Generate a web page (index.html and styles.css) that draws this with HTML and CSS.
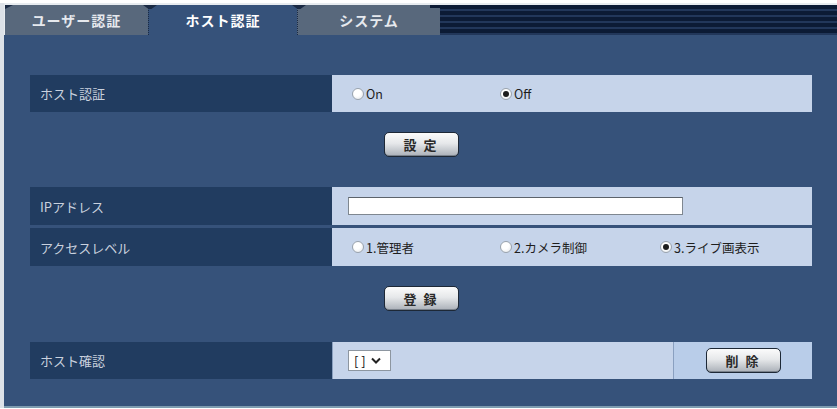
FILE: index.html
```html
<!DOCTYPE html>
<html lang="ja">
<head>
  <meta charset="UTF-8">
  <title>ホスト認証</title>
  <link rel="stylesheet" href="styles.css">
</head>
<body>
  <div class="window">
    <nav class="tabs">
      <div class="tab">ユーザー認証</div>
      <div class="tab tab-active">ホスト認証</div>
      <div class="tab">システム</div>
      <div class="tab-fill"></div>
    </nav>

    <main class="panel">
      <div class="row">
        <div class="label">ホスト認証</div>
        <div class="value">
          <label class="opt"><input type="radio" name="auth"> On</label>
          <label class="opt"><input type="radio" name="auth" checked> Off</label>
        </div>
      </div>
      <div class="actions">
        <button class="btn">設 定</button>
      </div>

      <div class="group">
        <div class="row">
          <div class="label">IPアドレス</div>
          <div class="value">
            <input type="text" class="text-input">
          </div>
        </div>
        <div class="row">
          <div class="label">アクセスレベル</div>
          <div class="value">
            <label class="opt"><input type="radio" name="level"> 1.管理者</label>
            <label class="opt opt-wide"><input type="radio" name="level"> 2.カメラ制御</label>
            <label class="opt"><input type="radio" name="level" checked> 3.ライブ画表示</label>
          </div>
        </div>
      </div>
      <div class="actions">
        <button class="btn">登 録</button>
      </div>

      <div class="row row-split">
        <div class="label">ホスト確認</div>
        <div class="value">
          <span class="select">[ ]
            <svg width="10" height="7" viewBox="0 0 10 7" fill="none">
              <path d="M1 1.5L5 5.5L9 1.5" stroke="#222" stroke-width="2"/>
            </svg>
          </span>
        </div>
        <div class="value value-alt">
          <button class="btn">削 除</button>
        </div>
      </div>
    </main>
  </div>
</body>
</html>
```

FILE: styles.css
```css
:root {
  --panel: #36527a;
  --label: #213c60;
  --cell: #c6d4ea;
  --cell-alt: #b9cde9;
  --tab: #58687c;
  --text-light: #c9d1de;
}

* {
  margin: 0;
  padding: 0;
  box-sizing: border-box;
}

body {
  font-family: "Noto Sans CJK JP", "Noto Sans", sans-serif;
  background: #fff;
  height: 409px;
  overflow: hidden;
}

.window {
  margin-top: 3px;
  border-left: 4px solid #dde2e8;
}

/* tabs */

.tabs {
  display: flex;
  height: 32px;
  padding-top: 2px;
  background: #e8ecf0;
}

.tab {
  position: relative;
  width: 143px;
  display: flex;
  align-items: center;
  justify-content: center;
  background: var(--tab);
  color: #e6e9ee;
  font-size: 14px;
  font-weight: 700;
  letter-spacing: 1px;
  border-left: 1px dotted #1a2a44;
}

.tab:first-child {
  margin-left: 1px;
  border-left: none;
}

.tab::before {
  content: "";
  position: absolute;
  left: -6px;
  top: 0;
  width: 14px;
  height: 4px;
  background: #1a2a44;
  clip-path: polygon(0 0, 100% 0, 60% 100%, 40% 100%);
}

.tab:first-child::before {
  left: 0;
  width: 8px;
  clip-path: polygon(0 0, 100% 0, 0 100%);
}

.tab-active {
  width: 149px;
  background: var(--panel);
  color: #fff;
}

.tab-fill {
  flex: 1;
  margin-left: -10px;
  background: repeating-linear-gradient(to bottom, #0c1b35 0 4px, #22375a 4px 6px);
  clip-path: polygon(0 0, 100% 0, 100% 100%, 10px 100%, 10px 3px, 0 3px);
}

/* panel */

.panel {
  background: var(--panel);
  padding: 40px 25px 27px 26px;
  border-bottom: 2px solid #7e9cb0;
}

.group {
  display: flex;
  flex-direction: column;
  gap: 3px;
  margin-top: 30px;
}

.row {
  display: grid;
  grid-template-columns: 302px 1fr;
  height: 37px;
}

.group .row {
  height: 38px;
}

.row-split {
  grid-template-columns: 302px 340px 1fr;
  gap: 1px;
  margin-top: 31px;
  background: #8aa0c0;
}

.label {
  display: flex;
  align-items: center;
  padding-left: 10px;
  background: var(--label);
  color: var(--text-light);
  font-size: 13px;
}

.value {
  display: flex;
  align-items: center;
  padding-left: 20px;
  background: var(--cell);
  color: #1e1e1e;
  font-size: 12.5px;
}

.row-split .value {
  padding-left: 15px;
}

.value-alt {
  background: var(--cell-alt);
  justify-content: center;
  padding-left: 0;
}

.row-split .value-alt {
  padding-left: 0;
}

.opt {
  display: flex;
  align-items: center;
  gap: 2px;
  width: 148px;
}

.opt-wide {
  width: 160px;
}

.opt input {
  appearance: none;
  width: 12px;
  height: 12px;
  border-radius: 50%;
  border: 1px solid #9aa3ad;
  background: radial-gradient(circle at 40% 35%, #fff 40%, #dfe3e8);
  display: grid;
  place-items: center;
}

.opt input:checked::after {
  content: "";
  width: 6px;
  height: 6px;
  border-radius: 50%;
  background: #1d1d1d;
}

.text-input {
  width: 335px;
  height: 18px;
  margin-left: -4px;
  border: 1px solid #7f8790;
  border-top-color: #5c636b;
  background: #fff;
}

.select {
  display: flex;
  align-items: center;
  gap: 5px;
  width: 43px;
  height: 21px;
  padding-left: 5px;
  background: #fff;
  border: 1px solid #8d96a0;
  font-size: 13px;
  color: #111;
}

/* buttons */

.actions {
  display: flex;
  justify-content: center;
  margin-top: 20px;
}

.btn {
  width: 75px;
  height: 25px;
  border: 1px solid #1d2836;
  border-radius: 5px;
  background: linear-gradient(to bottom, #fbfbfb 0%, #e6e8ea 45%, #aab0b8 100%);
  box-shadow: inset 0 -1px 0 #7a828c;
  font-family: inherit;
  font-size: 13px;
  font-weight: 700;
  color: #2a2a2a;
  letter-spacing: 2px;
}
```
